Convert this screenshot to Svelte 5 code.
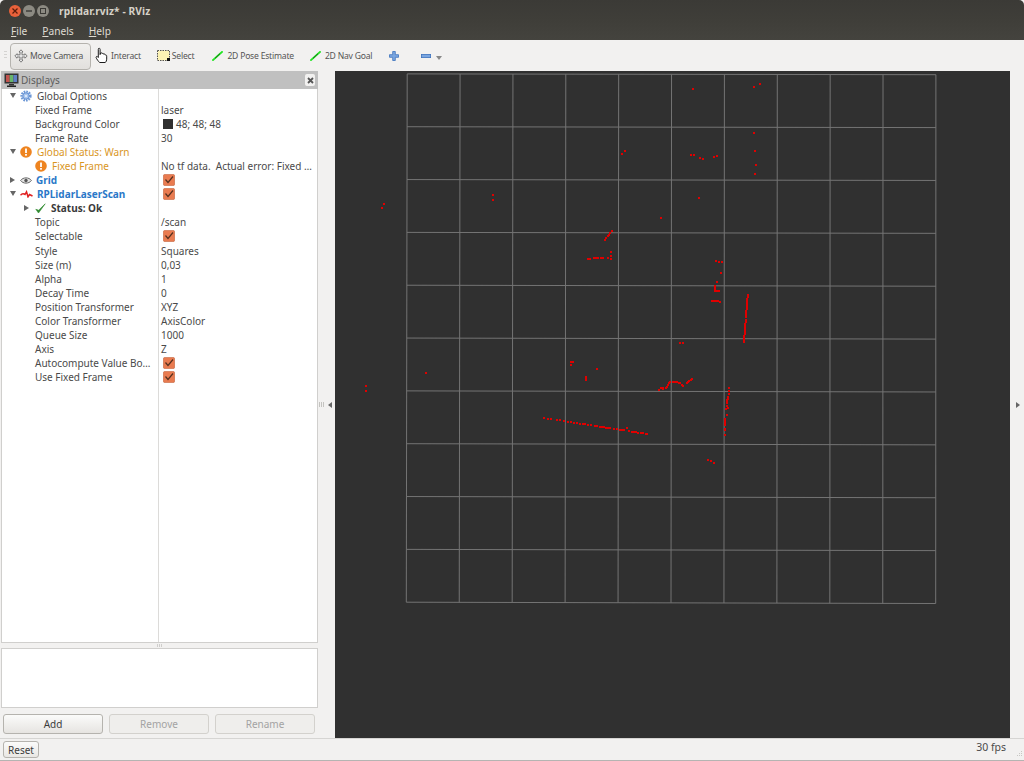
<script>
  const TL=[407.2,73.9], TR=[935.9,74.7], BL=[406.3,602.2], BR=[935.7,603.5];
  function P(u,v){
    const tx=TL[0]+(TR[0]-TL[0])*u, ty=TL[1]+(TR[1]-TL[1])*u;
    const bx=BL[0]+(BR[0]-BL[0])*u, by=BL[1]+(BR[1]-BL[1])*u;
    return [tx+(bx-tx)*v, ty+(by-ty)*v];
  }
  const steps=[0,1,2,3,4,5,6,7,8,9,10];
  const grid=[];
  for(const i of steps){
    const a=P(i/10,0),b=P(i/10,1),c=P(0,i/10),d=P(1,i/10);
    grid.push(`M${a[0]} ${a[1]}L${b[0]} ${b[1]}`);
    grid.push(`M${c[0]} ${c[1]}L${d[0]} ${d[1]}`);
  }
  function line(x0,y0,x1,y1,n){const r=[];for(let i=0;i<n;i++){const t=n>1?i/(n-1):0;r.push([x0+(x1-x0)*t,y0+(y1-y0)*t]);}return r;}
  const longXs=[41,53,62,80,89,103,114,123,131,142,151,159,166,175,183,194,201,209,216,222,229,235,241,253,262,269,276,281,297,306,311,318,325,332,338,348,352];
  const poseXs=[175,180,192,198,204,212,218];
  const pts = [
    [693,89],[753.7,86.7],[760,83.7],[754.3,133.3],[755,151.3],[756,164.7],[755,174],[622.3,154],[625,151.3],
    [691,155.3],[694,155.3],[700,158.3],[703.3,159],[713.7,157],[716.7,156.3],[698.7,198.3],
    [382,208],[384,204],[493,195],[493,200],[366,386],[366,391],[426,373],
    [661,218],[611,251.7],[611,256],[611,258.7],[608,257.7],
    ...line(605,240,611.7,231,6),
    ...poseXs.map(x=>[530+x/3, 258.7-(x-175)*0.02]),
    [716,261],[718.5,262],[722,262],[720.7,273],[717,281.7],
    ...line(715,286,715,290,4),...line(715,290.5,719,291.3,4),...line(712,301.3,716,301.3,3),[718,301],[720,302],
    ...line(747.7,295,744,342,24),[680,342.7],[682.5,342.7],
    [570.7,362],[572.7,362.3],[570.7,364.7],[596.7,369.3],[586,377],[585.5,378.5],[586,380],
    [659,390.3],[661,388],[662.7,388],[662.7,389],[666,388],[667,387],[667.7,385],[669,383.3],[670,382.3],[672.7,381.7],[675,381.7],[676.7,382],[679,382.6],[680,383.3],[681.5,384.6],[682.7,386],
    ...line(686.7,382.7,692,379.3,5),
    [728.7,388.3],[728.7,390.6],[729.3,394.3],...line(727.7,396.6,727.3,403,6),[727,406],[726,408.6],[728,408],[726.6,415],...line(725.3,419.3,725,425,4),[724.7,430],[725.3,428.6],[724.7,435],
    ...longXs.map(x=>[530+x/3, 350+(204+(x-41)*48/311)/3]),[626.6,428],
    [708,460],[711.3,461],[713.7,462.7]
  ];
  const rows = [
    {d:0,arrow:'down',icon:'gear',label:'Global Options',value:''},
    {d:1,label:'Fixed Frame',value:'laser'},
    {d:1,label:'Background Color',value:'48; 48; 48',swatch:true},
    {d:1,label:'Frame Rate',value:'30'},
    {d:0,arrow:'down',icon:'warn',label:'Global Status: Warn',value:'',cls:'warn'},
    {d:2,icon:'warn',label:'Fixed Frame',value:'No tf data.  Actual error: Fixed …',cls:'warn'},
    {d:0,arrow:'right',icon:'eye',label:'Grid',value:'',cls:'blue',check:true},
    {d:0,arrow:'down',icon:'scan',label:'RPLidarLaserScan',value:'',cls:'blue',check:true},
    {d:2,arrow:'right',icon:'ok',label:'Status: Ok',value:'',cls:'ok'},
    {d:1,label:'Topic',value:'/scan'},
    {d:1,label:'Selectable',value:'',check:true},
    {d:1,label:'Style',value:'Squares'},
    {d:1,label:'Size (m)',value:'0,03'},
    {d:1,label:'Alpha',value:'1'},
    {d:1,label:'Decay Time',value:'0'},
    {d:1,label:'Position Transformer',value:'XYZ'},
    {d:1,label:'Color Transformer',value:'AxisColor'},
    {d:1,label:'Queue Size',value:'1000'},
    {d:1,label:'Axis',value:'Z'},
    {d:1,label:'Autocompute Value Bo…',value:'',check:true},
    {d:1,label:'Use Fixed Frame',value:'',check:true}
  ];
</script>

<div class="win">
  <header class="title">
    <div class="lights">
      <span class="light close"><svg width="8" height="8" viewBox="0 0 8 8"><path d="M1.5 1.5l5 5M6.5 1.5l-5 5" stroke="#5a1c0c" stroke-width="1.2"/></svg></span>
      <span class="light"><svg width="8" height="8" viewBox="0 0 8 8"><path d="M1 4h6" stroke="#3a3935" stroke-width="1.4"/></svg></span>
      <span class="light"><svg width="8" height="8" viewBox="0 0 8 8"><rect x="1.5" y="1.5" width="5" height="5" fill="none" stroke="#3a3935"/></svg></span>
    </div>
    <span class="title-text">rplidar.rviz* - RViz</span>
  </header>
  <nav class="menu"><span><u>F</u>ile</span><span><u>P</u>anels</span><span><u>H</u>elp</span></nav>

  <div class="toolbar">
    <span class="grip"></span>
    <button class="tool active">
      <svg width="14" height="14" viewBox="0 0 14 14"><path d="M7 .8l2 2.2H8v2.8h3V4.7l2.2 2.3L11 9.2V8H8v3h1l-2 2.2L5 11h1V8H3v1.2L.8 7 3 4.7v1.1h3V3H5z" fill="#e4e4e4" stroke="#666" stroke-width=".8"/></svg>
      Move Camera
    </button>
    <span class="tool t-interact">
      <svg width="14" height="17" viewBox="0 0 14 17"><path d="M3.5 1.5c.8-.6 1.6 0 1.6.9v5.2l.4-1.6c.8-.5 1.5-.2 1.6.6.7-.5 1.5-.3 1.6.6.8-.4 1.5 0 1.6.8.9-.2 1.4.2 1.4 1.2v3c0 1.6-.6 2.4-1.4 3.3H4.600C3.800 14.800 1.400 11.800 1.100 10.600c-.2-.9.600-1.500 1.400-.9L3.300 10.500V2.400z" fill="#fff" stroke="#1b1b1b" stroke-width="1"/></svg>
      Interact
    </span>
    <span class="tool t-select">
      <svg width="13" height="11" viewBox="0 0 13 11"><rect x=".5" y=".5" width="12" height="10" fill="#fdf3b4" stroke="#555" stroke-dasharray="1.500 1"/><rect x="10" y="8" width="3" height="3" fill="#111"/></svg>
      Select
    </span>
    <span class="tool t-pose">
      <svg width="11" height="10" viewBox="0 0 11 10"><path d="M.3 9.700L10.700 .3" stroke="#22e622" stroke-width="1.800"/><path d="M3 7.300L8 2.700" stroke="#146614" stroke-width=".9"/></svg>
      2D Pose Estimate
    </span>
    <span class="tool t-nav">
      <svg width="11" height="10" viewBox="0 0 11 10"><path d="M.3 9.700L10.700 .3" stroke="#22e622" stroke-width="1.800"/><path d="M3 7.300L8 2.700" stroke="#146614" stroke-width=".9"/></svg>
      2D Nav Goal
    </span>
    <span class="t-plus"><svg width="10" height="10" viewBox="0 0 10 10"><path d="M3.700.5h2.600v3.200h3.200v2.600H6.300v3.200H3.700V6.300H.5V3.700h3.200z" fill="#7ba6e0" stroke="#3d72bd" stroke-width=".8"/></svg></span>
    <span class="t-minus"><svg width="10" height="4" viewBox="0 0 10 4"><rect x=".4" y=".4" width="9.200" height="3.200" fill="#7ba6e0" stroke="#3d72bd" stroke-width=".8"/></svg></span>
    <span class="t-caret"></span>
  </div>

  <div class="main">
    <aside class="side">
      <div class="dock-head">
        <svg width="15" height="14" viewBox="0 0 15 14"><rect x=".5" y=".5" width="14" height="10" fill="#333" /><rect x="2" y="2" width="3.700" height="7" fill="#c2524e"/><rect x="5.700" y="2" width="3.700" height="7" fill="#67b46b"/><rect x="9.400" y="2" width="3.700" height="7" fill="#5f7fc4"/><rect x="5" y="11" width="5" height="1.500" fill="#333"/><rect x="3" y="12.500" width="9" height="1.500" fill="#222"/></svg>
        <span>Displays</span>
        <span class="dock-x"><svg width="7" height="7" viewBox="0 0 7 7"><path d="M1 1l5 5M6 1L1 6" stroke="#555" stroke-width="1.800"/></svg></span>
      </div>
      <div class="tree">
        {#each rows as r}
          <div class="row">
            <div class="cell-l d{r.d} {r.cls ?? ''}">
              {#if r.arrow}<span class="arrow {r.arrow}"></span>{/if}
              {#if r.icon === 'gear'}
                <svg class="ic" width="12" height="12" viewBox="0 0 12 12"><circle cx="6" cy="6" r="4.300" fill="none" stroke="#6d98d6" stroke-width="2.600" stroke-dasharray="1.600 .9"/><circle cx="6" cy="6" r="3.200" fill="#a9c6ee" stroke="#5f8cd0" stroke-width=".9"/><circle cx="6" cy="6" r="1.100" fill="#e8f0fb"/></svg>
              {:else if r.icon === 'warn'}
                <svg class="ic" width="12" height="12" viewBox="0 0 12 12"><circle cx="6" cy="6" r="5.800" fill="#ee8420"/><rect x="5.100" y="2.500" width="1.800" height="4.500" fill="#fff"/><rect x="5.100" y="8" width="1.800" height="1.700" fill="#fff"/></svg>
              {:else if r.icon === 'eye'}
                <svg class="ic" width="12" height="9" viewBox="0 0 12 9"><path d="M.6 4.500C3 1 9 1 11.400 4.500 9 8 3 8 .6 4.500z" fill="#e4e4e4" stroke="#666"/><circle cx="6" cy="4.500" r="1.700" fill="#555"/></svg>
              {:else if r.icon === 'scan'}
                <svg class="ic" width="13" height="8" viewBox="0 0 13 8"><path d="M.5 5.200C2 3.500 3.500 3.500 5 4.500L6.500 1.800 8 6.800 9.500 4.500 12.500 6" fill="none" stroke="#e02020" stroke-width="1.500"/></svg>
              {:else if r.icon === 'ok'}
                <svg class="ic" width="11" height="11" viewBox="0 0 11 11"><path d="M.8 6.300L3.500 10 10.200 .8 3.700 7.200z" fill="#2f8a2f" stroke="#2f8a2f" stroke-width=".6"/></svg>
              {/if}
              <span class="lab">{r.label}</span>
            </div>
            <div class="cell-r">
              {#if r.swatch}<span class="swatch"></span>{/if}
              {#if r.check}
                <svg class="chk" width="12" height="12" viewBox="0 0 12 12"><rect x=".4" y=".4" width="11.200" height="11.200" rx="1.500" fill="#e97b50" stroke="#c96a45" stroke-width=".7"/><path d="M2.500 5.500L5 8.500 10 2.500" fill="none" stroke="#55301f" stroke-width="1.200"/></svg>
              {/if}
              <span class="val">{r.value}</span>
            </div>
          </div>
        {/each}
      </div>
      <div class="split"><i></i><i></i><i></i></div>
      <div class="help"></div>
      <div class="btns">
        <button class="btn">Add</button>
        <button class="btn dis">Remove</button>
        <button class="btn dis">Rename</button>
      </div>
    </aside>
    <div class="gutter left">
      <span class="dots"><i></i><i></i><i></i></span>
      <span class="tri-l"></span>
    </div>
    <div class="view">
      <svg width="675" height="667" viewBox="335 71 675 667">
        <g stroke="#747474" stroke-width="1" fill="none">
          {#each grid as d}<path {d}/>{/each}
        </g>
        <g fill="#e00000" shape-rendering="crispEdges">
          {#each pts as p}<rect x={Math.round(p[0] - 1)} y={Math.round(p[1] - 1)} width="2" height="2"/>{/each}
        </g>
      </svg>
    </div>
    <div class="gutter right"><span class="tri-r"></span></div>
  </div>

  <footer class="status">
    <button class="reset">Reset</button>
    <span class="fps">30 fps</span>
    <svg class="rgrip" width="6" height="7" viewBox="0 0 6 7"><g fill="#c8c7c4"><rect x="4" y="0" width="1" height="1"/><rect x="2" y="2" width="1" height="1"/><rect x="4" y="2" width="1" height="1"/><rect x="0" y="4" width="1" height="1"/><rect x="2" y="4" width="1" height="1"/><rect x="4" y="4" width="1" height="1"/></g></svg>
  </footer>
</div>

<style>
  :global(body) { margin: 0; background: #f2f1f0; }
  .win { width: 1024px; height: 761px; display: flex; flex-direction: column; overflow: hidden; font-family: "Noto Sans", "Open Sans", sans-serif; font-size: 10px; color: #4a4a4a; background: #f2f1f0; }
  .title { height: 20px; flex: none; background: linear-gradient(#3b3a36, #3f3e39); border-radius: 5px 5px 0 0; display: flex; align-items: center; padding-left: 9px; color: #d6d2c8; }
  .lights { display: flex; gap: 2px; width: 50px; margin-top: 2px; }
  .light { width: 12px; height: 12px; border-radius: 50%; background: #8c8a82; display: flex; align-items: center; justify-content: center; }
  .light.close { background: #e8613a; }
  .title-text { font-size: 10.200px; font-weight: 700; letter-spacing: .1px; margin-top: 2px; }
  .menu { height: 20px; flex: none; background: linear-gradient(#3f3e39, #44433e); display: flex; gap: 15px; padding-left: 11px; align-items: center; color: #dfdbd2; font-size: 10.200px; box-sizing: border-box; padding-top: 1px; }
  .menu u { text-decoration-thickness: 1px; }
  .toolbar { height: 31px; flex: none; display: flex; align-items: center; box-sizing: border-box; background: #f2f1f0; padding-left: 4px; color: #555; }
  .grip { width: 3px; height: 9px; margin-right: 3px; background: repeating-linear-gradient(#d4d3d1 0 1px, transparent 1px 3px); }
  .tool { display: flex; align-items: center; gap: 2px; font: inherit; font-size: 8.600px; letter-spacing: -.22px; color: #555; height: 27px; }
  .tool.active { width: 81px; box-sizing: border-box; border: 1px solid #b5b3ae; border-radius: 4px; background: linear-gradient(#f1f0ee, #e2e0dd); padding: 0 0 0 3px; margin-top: 1px; }
  .t-interact { margin-left: 4px; }
  .t-select { margin-left: 16px; gap: 2px; }
  .t-pose { margin-left: 18px; gap: 4px; }
  .t-nav { margin-left: 16px; gap: 4px; }
  .t-plus { margin-left: 17px; display: flex; }
  .t-minus { margin-left: 22px; display: flex; margin-top: 1px; }
  .t-caret { margin-left: 5px; margin-top: 5px; width: 0; height: 0; border: 3.500px solid transparent; border-top: 4px solid #888; border-bottom: 0; }
  .main { flex: 1; min-height: 0; display: flex; }
  .side { width: 318px; flex: none; display: flex; flex-direction: column; }
  .dock-head { height: 18px; flex: none; background: #c0c0c0; display: flex; align-items: center; padding-left: 3px; gap: 2px; font-size: 10px; color: #5c5c5c; margin-left: 1px; }
  .dock-x { margin-left: auto; margin-right: 3px; width: 10px; height: 12px; background: #f2f1f0; border-radius: 2px; display: flex; align-items: center; justify-content: center; }
  .tree { height: 554px; flex: none; border: 1px solid #d0cfcd; border-width: 0 1px 1px; box-sizing: border-box; margin-left: 1px; background-color: #fff; background-image: linear-gradient(#dcdbd9, #dcdbd9); background-size: 1px 100%; background-repeat: no-repeat; background-position: 156px 0; }
  .row { height: 14.060px; display: flex; line-height: 14px; white-space: nowrap; color: #4a4a4a; }
  .cell-l { width: 157px; flex: none; position: relative; box-sizing: border-box; display: flex; align-items: center; }
  .cell-l.d0 { padding-left: 18px; }
  .cell-l.d1 { padding-left: 33px; }
  .cell-l.d2 { padding-left: 33px; }
  .arrow { position: absolute; width: 0; height: 0; }
  .d0 .arrow { left: 8px; }
  .d2 .arrow { left: 22px; }
  .arrow.down { top: 4px; border: 3.500px solid transparent; border-top: 5px solid #666; border-bottom: 0; }
  .arrow.right { top: 4px; border: 3.500px solid transparent; border-left: 5px solid #666; border-right: 0; }
  .ic { flex: none; margin-right: 5px; }
  .warn .lab { color: #d9961e; }
  .blue .lab { color: #2a78c8; font-weight: 700; margin-left: -1px; }
  .ok .lab { color: #3a3a3a; font-weight: 700; }
  .cell-r { padding-left: 2px; display: flex; align-items: center; }
  .val { white-space: pre; }
  .swatch { width: 10px; height: 10px; background: #303030; margin: 0 3px 0 2px; }
  .chk { margin-left: 2px; }
  .split { height: 5px; flex: none; display: flex; justify-content: center; gap: 1px; padding-top: 1px; box-sizing: border-box; }
  .split i { width: 1px; height: 3px; background: #cfcecc; }
  .help { height: 60px; flex: none; background: #fff; border: 1px solid #d0cfcd; box-sizing: border-box; margin-left: 1px; }
  .btns { display: flex; gap: 6px; padding: 6px 0 0 3px; }
  .btn { width: 100px; height: 20px; box-sizing: border-box; border: 1px solid #b5b3ae; border-radius: 3px; background: linear-gradient(#fbfbfa, #e6e4e1); font: inherit; color: #3c3c3c; padding: 0; }
  .btn.dis { color: #a3a3a3; background: #efeeec; border-color: #d3d1cd; }
  .gutter { display: flex; align-items: center; flex: none; }
  .gutter.left { width: 17px; gap: 3px; padding-left: 1px; box-sizing: border-box; }
  .gutter.right { width: 14px; justify-content: center; }
  .dots { display: flex; gap: 1px; }
  .dots i { width: 1px; height: 5px; background: #c4c3c0; }
  .tri-l { width: 0; height: 0; border: 3.500px solid transparent; border-right: 4px solid #666; border-left: 0; margin-left: 1px; }
  .tri-r { width: 0; height: 0; border: 3.500px solid transparent; border-left: 4px solid #666; border-right: 0; margin-left: 2px; }
  .view { width: 675px; flex: none; background: #303030; }
  .view svg { display: block; }
  .status { height: 23px; flex: none; display: flex; align-items: center; border-top: 1px solid #d6d5d3; border-bottom: 1px solid #b5b4b2; box-sizing: border-box; padding-left: 3px; }
  .reset { width: 36px; height: 17px; box-sizing: border-box; border: 1px solid #b5b3ae; border-radius: 3px; background: linear-gradient(#fbfbfa, #e9e7e4); font: inherit; color: #3c3c3c; padding: 0; }
  .fps { margin-left: auto; margin-right: 11px; margin-top: -5px; font-size: 10.500px; }
  .rgrip { margin-right: 1px; margin-top: 10px; }
</style>
